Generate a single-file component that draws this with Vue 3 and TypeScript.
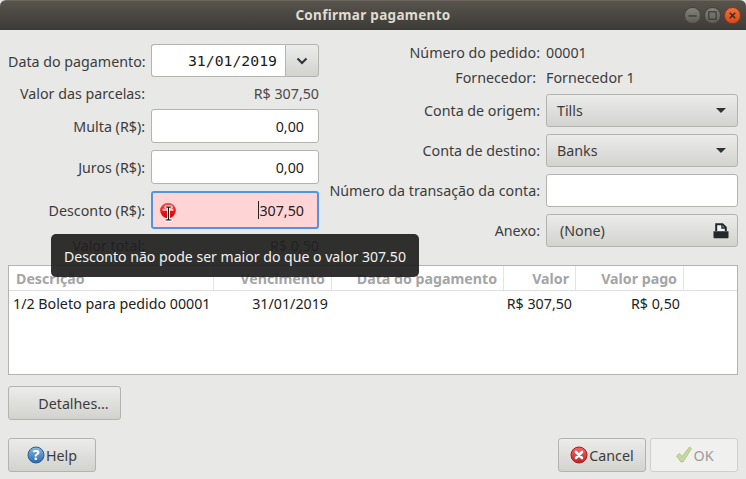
<script setup lang="ts">
interface Parcela {
  descricao: string;
  vencimento: string;
  pagamento: string;
  valor: string;
  pago: string;
}

const colunas = [
  { nome: "Descrição", cls: "col-desc" },
  { nome: "Vencimento", cls: "col-venc" },
  { nome: "Data do pagamento", cls: "col-data" },
  { nome: "Valor", cls: "col-valor" },
  { nome: "Valor pago", cls: "col-pago" },
  { nome: "", cls: "col-fim" },
];

const parcelas: Parcela[] = [
  {
    descricao: "1/2 Boleto para pedido 00001",
    vencimento: "31/01/2019",
    pagamento: "",
    valor: "R$ 307,50",
    pago: "R$ 0,50",
  },
];
</script>

<template>
  <div class="janela">
    <header class="titulo">
      <span class="titulo-texto">Confirmar pagamento</span>
      <div class="controles">
        <span class="ctl">
          <svg width="11" height="11" viewBox="0 0 12 12"><path d="M1.5 6.5h9" stroke="#3a3a36" stroke-width="1.4" /></svg>
        </span>
        <span class="ctl">
          <svg width="11" height="11" viewBox="0 0 12 12"><rect x="2" y="2" width="8" height="8" fill="none" stroke="#3a3a36" stroke-width="1.3" /></svg>
        </span>
        <span class="ctl fechar">
          <svg width="11" height="11" viewBox="0 0 12 12"><path d="M3 3l6 6M9 3l-6 6" stroke="#3a2a20" stroke-width="1.6" /></svg>
        </span>
      </div>
    </header>

    <main class="corpo">
      <section class="form">
        <div class="coluna esquerda">
          <div class="linha h33">
            <label class="desce">Data do pagamento:</label>
            <div class="data">
              <div class="data-valor">31/01/2019</div>
              <div class="data-btn">
                <svg width="12" height="8" viewBox="0 0 12 8"><path d="M1.5 1.5L6 6l4.5-4.5" fill="none" stroke="#2e3436" stroke-width="2" /></svg>
              </div>
            </div>
          </div>
          <div class="linha h18">
            <label>Valor das parcelas:</label>
            <div class="valor">R$ 307,50</div>
          </div>
          <div class="linha h34">
            <label>Multa (R$):</label>
            <div class="entrada num">0,00</div>
          </div>
          <div class="linha h34">
            <label>Juros (R$):</label>
            <div class="entrada num">0,00</div>
          </div>
          <div class="linha h38">
            <label>Desconto (R$):</label>
            <div class="entrada num erro">
              <svg class="icone-erro" width="16" height="17" viewBox="0 0 16 17">
                <defs>
                  <linearGradient id="rg" x1="0" y1="0" x2="0" y2="1">
                    <stop offset="0" stop-color="#f45a5a" />
                    <stop offset="0.45" stop-color="#f01818" />
                    <stop offset="1" stop-color="#d80000" />
                  </linearGradient>
                </defs>
                <circle cx="8" cy="8.5" r="7.8" fill="url(#rg)" />
                <rect x="2.5" y="6.6" width="11" height="2.2" fill="#f9c8c8" />
              </svg>
              <span class="caret"></span>307,50
            </div>
          </div>
          <div class="linha h18">
            <label>Valor total:</label>
            <div class="valor">R$ 0,50</div>
          </div>
        </div>

        <div class="coluna direita">
          <div class="linha h18 info">
            <label>Número do pedido:</label>
            <div class="texto">00001</div>
          </div>
          <div class="linha h18 info">
            <label class="recuo">Fornecedor:</label>
            <div class="texto">Fornecedor 1</div>
          </div>
          <div class="linha h33">
            <label>Conta de origem:</label>
            <div class="combo">
              <span>Tills</span>
              <span class="seta"></span>
            </div>
          </div>
          <div class="linha h33">
            <label>Conta de destino:</label>
            <div class="combo">
              <span>Banks</span>
              <span class="seta"></span>
            </div>
          </div>
          <div class="linha h33">
            <label>Número da transação da conta:</label>
            <div class="entrada"></div>
          </div>
          <div class="linha h33">
            <label>Anexo:</label>
            <div class="combo anexo">
              <span>(None)</span>
              <svg width="16" height="16" viewBox="0 0 16 16">
                <path d="M3.2 8V1.2h6.3l3.3 3.3V8" fill="#f2f2f0" stroke="#23282a" stroke-width="2" />
                <path d="M9 1v4h4" fill="none" stroke="#23282a" stroke-width="1.4" />
                <path d="M.5 8.2h15v6.2a.8.8 0 0 1-.8.8H1.3a.8.8 0 0 1-.8-.8z" fill="#23282a" />
              </svg>
            </div>
          </div>
        </div>
      </section>

      <section class="tabela">
        <div class="cabecalho">
          <div v-for="c in colunas" :key="c.cls" class="th" :class="c.cls">{{ c.nome }}</div>
        </div>
        <div v-for="p in parcelas" :key="p.descricao" class="tr">
          <div class="td col-desc">{{ p.descricao }}</div>
          <div class="td col-venc">{{ p.vencimento }}</div>
          <div class="td col-data">{{ p.pagamento }}</div>
          <div class="td col-valor">{{ p.valor }}</div>
          <div class="td col-pago">{{ p.pago }}</div>
        </div>
      </section>

      <div class="detalhes">
        <button class="btn btn-detalhes">Detalhes...</button>
      </div>

      <footer class="rodape">
        <button class="btn btn-acao">
          <svg width="18" height="18" viewBox="0 0 18 18">
            <defs>
              <linearGradient id="gh" x1="0" y1="0" x2="0" y2="1">
                <stop offset="0" stop-color="#8ab8e0" />
                <stop offset="1" stop-color="#2b68a8" />
              </linearGradient>
            </defs>
            <circle cx="9" cy="9" r="8" fill="url(#gh)" stroke="#2a5f99" />
            <text x="9" y="14" text-anchor="middle" class="interrog">?</text>
          </svg>
          Help
        </button>
        <div class="acoes">
          <button class="btn btn-acao">
            <svg width="18" height="18" viewBox="0 0 18 18">
              <defs>
                <linearGradient id="gc" x1="0" y1="0" x2="0" y2="1">
                  <stop offset="0" stop-color="#ee6b6b" />
                  <stop offset="1" stop-color="#c41f1f" />
                </linearGradient>
              </defs>
              <circle cx="9" cy="9" r="8" fill="url(#gc)" stroke="#a81c1c" />
              <path d="M6 6l6 6M12 6l-6 6" stroke="#fff" stroke-width="2.6" stroke-linecap="round" />
            </svg>
            Cancel
          </button>
          <button class="btn btn-acao desabilitado">
            <svg class="check" width="18" height="18" viewBox="0 0 18 18">
              <path d="M1.5 10l3-2.5 2.5 3L14.5 1l2 1.5L8 16H6z" fill="#c6d8a0" stroke="#a9bf80" stroke-width=".8" />
            </svg>
            OK
          </button>
        </div>
      </footer>
    </main>

    <div class="tooltip">Desconto não pode ser maior do que o valor 307.50</div>
    <svg class="cursor" width="9" height="17" viewBox="0 0 9 17">
      <path d="M1 1h7v2H5.5v11H8v2H1v-2h2.5V3H1z" fill="#111" stroke="#fff" stroke-width="1" />
    </svg>
  </div>
</template>

<style>
html,
body {
  margin: 0;
  background: #e8e8e7;
}
</style>

<style scoped>
.janela {
  position: relative;
  width: 746px;
  height: 479px;
  overflow: hidden;
  background: #e8e8e7;
  font-family: "Noto Sans", sans-serif;
  font-size: 14.25px;
  color: #3c3c3c;
}
.titulo {
  position: relative;
  height: 30px;
  box-sizing: border-box;
  padding-bottom: 1px;
  display: flex;
  align-items: center;
  justify-content: center;
  background: linear-gradient(#57534c, #3d3b37);
  border-top: 1px solid #6b675f;
  border-radius: 6px 6px 0 0;
}
.titulo-texto {
  font-weight: 700;
  font-size: 13.5px;
  letter-spacing: 0.3px;
  color: #dfdbd2;
}
.controles {
  position: absolute;
  right: 5px;
  top: 6px;
  display: flex;
  gap: 3px;
}
.ctl {
  width: 17px;
  height: 17px;
  box-sizing: border-box;
  border-radius: 50%;
  display: flex;
  align-items: center;
  justify-content: center;
  background: linear-gradient(#85827a, #5f5c55);
  border: 1px solid #45433e;
}
.fechar {
  background: linear-gradient(#f0703f, #dd4814);
  border-color: #8c3a1c;
}
.corpo {
  padding: 14px 8px 0;
}
.form {
  display: flex;
  height: 210px;
}
.coluna {
  display: flex;
  flex-direction: column;
  gap: 7px;
}
.esquerda {
  width: 311px;
}
.direita {
  width: 419px;
}
.linha {
  display: flex;
  align-items: center;
  gap: 6px;
}
.linha label {
  text-align: right;
  white-space: nowrap;
}
.esquerda label {
  width: 137px;
  flex: none;
}
.direita label {
  width: 220px;
  flex: none;
  margin-left: 1px;
}
.direita label.recuo {
  box-sizing: border-box;
  padding-right: 4px;
}
.esquerda label.desce {
  padding-top: 1px;
}
.esquerda .linha > div {
  width: 168px;
  box-sizing: border-box;
}
.direita .linha > div {
  width: 192px;
  box-sizing: border-box;
}
.h18 {
  height: 18px;
}
.h33 {
  height: 33px;
}
.h34 {
  height: 34px;
}
.h38 {
  height: 38px;
}
.info {
  align-items: flex-start;
  line-height: 17px;
}
.valor {
  text-align: right;
  color: #4a4a48;
}
.texto {
  color: #3c3c3c;
}
.entrada {
  position: relative;
  height: 100%;
  background: #fff;
  border: 1px solid #b3b3b0;
  border-radius: 3px;
}
.num {
  display: flex;
  align-items: center;
  justify-content: flex-end;
  padding-right: 14px;
  color: #222;
}
.erro {
  background: #ffd4d4;
  border: 2px solid #5294e2;
  padding-right: 13px;
}
.icone-erro {
  position: absolute;
  left: 7px;
  top: 9px;
}
.caret {
  display: inline-block;
  width: 1px;
  height: 18px;
  background: #222;
}
.data {
  display: flex;
  height: 100%;
}
.data-valor {
  flex: 1;
  box-sizing: border-box;
  background: #fff;
  border: 1px solid #b3b3b0;
  border-right: none;
  border-radius: 3px 0 0 3px;
  padding-right: 8px;
  display: flex;
  align-items: center;
  justify-content: flex-end;
  font-family: "DejaVu Sans Mono", monospace;
  font-size: 14.8px;
  color: #1c1c1c;
}
.data-btn {
  width: 32px;
  display: flex;
  align-items: center;
  justify-content: center;
  background: linear-gradient(#ececea, #d2d2cf);
  border: 1px solid #b3b3b0;
  border-radius: 0 3px 3px 0;
}
.combo {
  height: 100%;
  display: flex;
  align-items: center;
  justify-content: space-between;
  padding: 0 11px 0 10px;
  background: linear-gradient(#ececea, #d2d2cf);
  border: 1px solid #b3b3b0;
  border-radius: 3px;
}
.combo.anexo {
  padding-left: 13px;
  padding-right: 8px;
}
.seta {
  width: 0;
  height: 0;
  border-left: 5px solid transparent;
  border-right: 5px solid transparent;
  border-top: 5px solid #2e3436;
}
.tabela {
  height: 110px;
  box-sizing: border-box;
  margin-top: 11px;
  background: #fff;
  border: 1px solid #b3b3b0;
}
.cabecalho {
  display: flex;
  height: 25px;
  box-sizing: border-box;
  border-bottom: 1px solid #dedede;
}
.th {
  box-sizing: border-box;
  height: 100%;
  display: flex;
  align-items: center;
  justify-content: flex-end;
  padding-right: 6px;
  font-weight: 700;
  font-size: 14.2px;
  color: #a3a5a6;
  border-right: 1px solid #e4e4e4;
  white-space: nowrap;
}
.th.col-desc {
  justify-content: flex-start;
  padding-left: 7px;
}
.th.col-fim {
  border-right: none;
}
.col-desc {
  width: 205px;
}
.col-venc {
  width: 118px;
}
.col-data {
  width: 172px;
}
.col-valor {
  width: 72px;
}
.col-pago {
  width: 108px;
}
.col-fim {
  flex: 1;
}
.tr {
  display: flex;
  height: 24px;
  align-items: center;
}
.td {
  box-sizing: border-box;
  color: #222;
  text-align: right;
  padding-right: 4px;
  white-space: nowrap;
}
.td.col-desc {
  text-align: left;
  padding-left: 4px;
}
.detalhes {
  margin-top: 11px;
}
.btn {
  height: 34px;
  box-sizing: border-box;
  font-family: inherit;
  font-size: 14.25px;
  color: #3c3c3c;
  background: linear-gradient(#ececea, #d2d2cf);
  border: 1px solid #b3b3b0;
  border-radius: 3px;
  display: inline-flex;
  align-items: center;
  justify-content: center;
  gap: 1px;
  padding: 0;
}
.btn-detalhes {
  width: 113px;
  padding-left: 18px;
}
.btn-acao {
  width: 88px;
}
.rodape {
  margin-top: 18px;
  display: flex;
  justify-content: space-between;
}
.acoes {
  display: flex;
  gap: 4px;
}
.desabilitado {
  background: #f0f0ef;
  border-color: #cfcfcd;
  color: #9a9c9d;
}
.interrog {
  font-family: "Noto Sans", sans-serif;
  font-size: 14px;
  font-weight: 700;
  fill: #fff;
}
.tooltip {
  position: absolute;
  left: 51px;
  top: 234px;
  width: 368px;
  height: 43px;
  box-sizing: border-box;
  padding: 13px 13px 0;
  border-radius: 5px;
  font-size: 14.08px;
  background: rgba(30, 30, 30, 0.92);
  color: #f2f2f2;
  white-space: nowrap;
}
.cursor {
  position: absolute;
  left: 164px;
  top: 205px;
}
</style>
